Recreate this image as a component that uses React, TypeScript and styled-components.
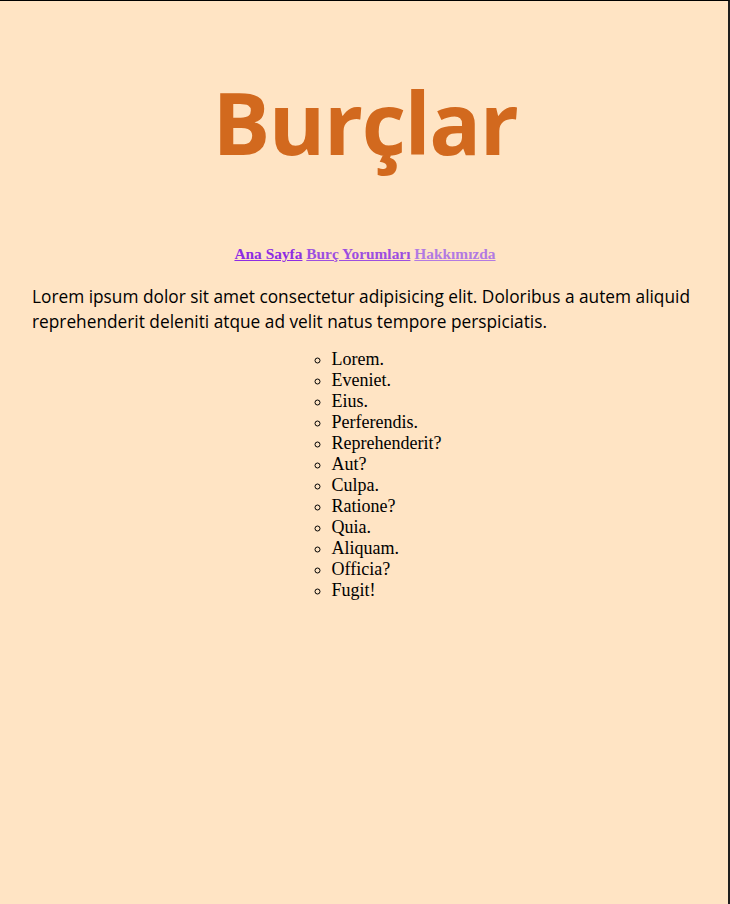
import React from "react";
import styled, { createGlobalStyle } from "styled-components";

const Global = createGlobalStyle`
  html, body { margin: 0; padding: 0; background: #ffe4c4; }
  #root { min-height: 904px; }
`;

const Page = styled.div`
  box-sizing: border-box;
  min-height: 904px;
  width: 730px;
  background: #ffe4c4;
  border-top: 1px solid #000;
  border-right: 2px solid #1e1e1e;
  padding: 0 30px 0 32px;
  display: flex;
  flex-direction: column;
  align-items: stretch;
`;

const Title = styled.h1`
  margin: 61px 0 0;
  text-align: center;
  font-family: "Comic Sans MS", "Open Sans", sans-serif;
  font-weight: 700;
  font-size: 86px;
  letter-spacing: -1.4px;
  line-height: 120px;
  color: #d2691e;
`;

const Nav = styled.nav`
  margin-top: 63px;
  text-align: center;
  font-family: "Liberation Serif", serif;
  font-weight: 700;
  font-size: 15.4px;
  line-height: 18px;
`;

const NavLink = styled.a<{ $shade: string }>`
  color: ${(p) => p.$shade};
  text-decoration: underline;
`;

const Text = styled.p`
  margin: 21px 0 0;
  font-family: "Comic Sans MS", "Open Sans", sans-serif;
  font-size: 17.3px;
  line-height: 25px;
  color: #000;
`;

const List = styled.ul`
  margin: 15px auto 0;
  padding-left: 43px;
  list-style-type: circle;
  font-family: "Liberation Serif", serif;
  font-size: 18px;
  line-height: 21px;
  color: #000;
  align-self: center;
`;

const items = [
  "Lorem.",
  "Eveniet.",
  "Eius.",
  "Perferendis.",
  "Reprehenderit?",
  "Aut?",
  "Culpa.",
  "Ratione?",
  "Quia.",
  "Aliquam.",
  "Officia?",
  "Fugit!",
];

export default function App() {
  return (
    <>
      <Global />
      <Page>
        <Title>Burçlar</Title>
        <Nav>
          <NavLink href="#" $shade="#8d2ce3">Ana Sayfa</NavLink>{" "}
          <NavLink href="#" $shade="#9c4ee0">Burç Yorumları</NavLink>{" "}
          <NavLink href="#" $shade="#b27ae2">Hakkımızda</NavLink>
        </Nav>
        <Text>
          Lorem ipsum dolor sit amet consectetur adipisicing elit. Doloribus a
          autem aliquid reprehenderit deleniti atque ad velit natus tempore
          perspiciatis.
        </Text>
        <List>
          {items.map((t) => (
            <li key={t}>{t}</li>
          ))}
        </List>
      </Page>
    </>
  );
}
